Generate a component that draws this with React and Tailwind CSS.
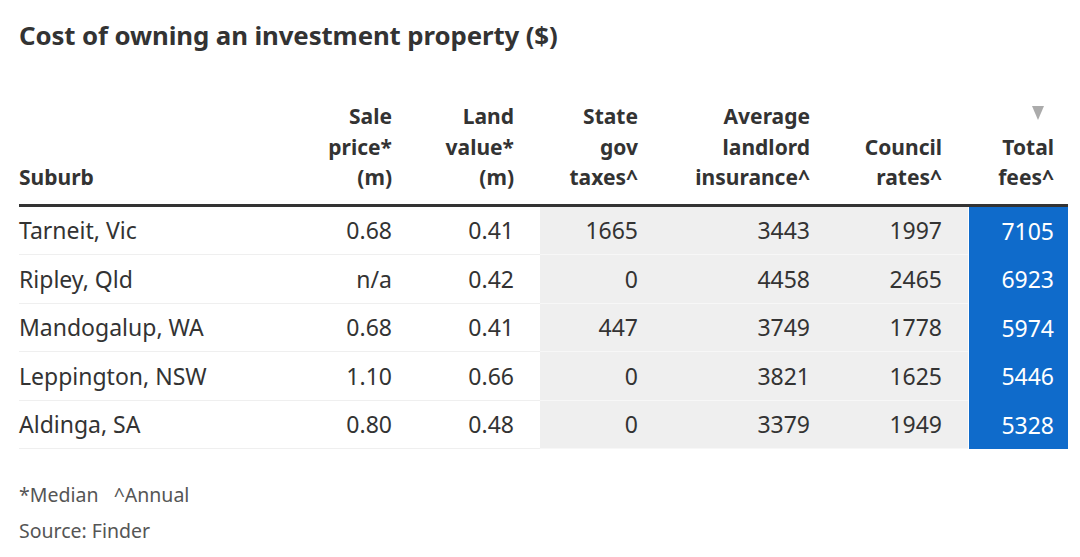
const rows = [
  ["Tarneit, Vic", "0.68", "0.41", "1665", "3443", "1997", "7105"],
  ["Ripley, Qld", "n/a", "0.42", "0", "4458", "2465", "6923"],
  ["Mandogalup, WA", "0.68", "0.41", "447", "3749", "1778", "5974"],
  ["Leppington, NSW", "1.10", "0.66", "0", "3821", "1625", "5446"],
  ["Aldinga, SA", "0.80", "0.48", "0", "3379", "1949", "5328"],
];

const cols = "grid grid-cols-[281px_118px_122px_124px_172px_132px_100px]";

function HeadCell({ lines, align = "right", last, arrow }) {
  return (
    <div
      className={`flex flex-col justify-end pb-[11px] ${
        align === "left" ? "items-start" : "items-end"
      } ${last ? "pr-[14px]" : align === "left" ? "" : "pr-[26px]"}`}
    >
      {arrow && (
        <svg width="12" height="14" viewBox="0 0 12 14" className="mb-[12px] mr-[10px]">
          <polygon points="0,0 12,0 6,14" fill="#ababab" />
        </svg>
      )}
      {lines.map((l) => (
        <span key={l} className="leading-[30.5px]">
          {l}
        </span>
      ))}
    </div>
  );
}

export default function App() {
  return (
    <div
      className="h-[557px] w-[1080px] bg-white pl-[19px] pt-[17px] text-[#333]"
      style={{ fontFamily: '"Noto Sans", "Open Sans", sans-serif' }}
    >
      <h1 className="text-[25.8px] font-bold leading-[36px] tracking-[-0.1px] text-[#333]">
        Cost of owning an investment property ($)
      </h1>

      <div className="mt-[48px] w-[1049px]">
        <div className={`${cols} border-b-[3px] border-[#333] text-[21px] font-bold`}>
          <HeadCell lines={["Suburb"]} align="left" />
          <HeadCell lines={["Sale", "price*", "(m)"]} />
          <HeadCell lines={["Land", "value*", "(m)"]} />
          <HeadCell lines={["State", "gov", "taxes^"]} />
          <HeadCell lines={["Average", "landlord", "insurance^"]} />
          <HeadCell lines={["Council", "rates^"]} />
          <HeadCell lines={["Total", "fees^"]} last arrow />
        </div>

        {rows.map((r) => (
          <div key={r[0]} className={`${cols} h-[48.5px] text-[23px]`}>
            <div className="flex items-center border-b border-[#efefef]">{r[0]}</div>
            <div className="flex items-center justify-end border-b border-[#efefef] pr-[26px]">{r[1]}</div>
            <div className="flex items-center justify-end border-b border-[#efefef] pr-[26px]">{r[2]}</div>
            <div className="flex items-center justify-end border-b border-[#f7f7f7] bg-[#efefef] pr-[26px]">{r[3]}</div>
            <div className="flex items-center justify-end border-b border-[#f7f7f7] bg-[#efefef] pr-[26px]">{r[4]}</div>
            <div className="flex items-center justify-end border-b border-[#f7f7f7] bg-[#efefef] pr-[26px]">{r[5]}</div>
            <div className="ml-px flex items-center justify-end bg-[#0f6bcb] pr-[14px] text-white">{r[6]}</div>
          </div>
        ))}
      </div>

      <div className="mt-[28px] text-[19.5px] leading-[36px] text-[#555]">
        <p>*Median&nbsp;&nbsp; ^Annual</p>
        <p>Source: Finder</p>
      </div>
    </div>
  );
}
